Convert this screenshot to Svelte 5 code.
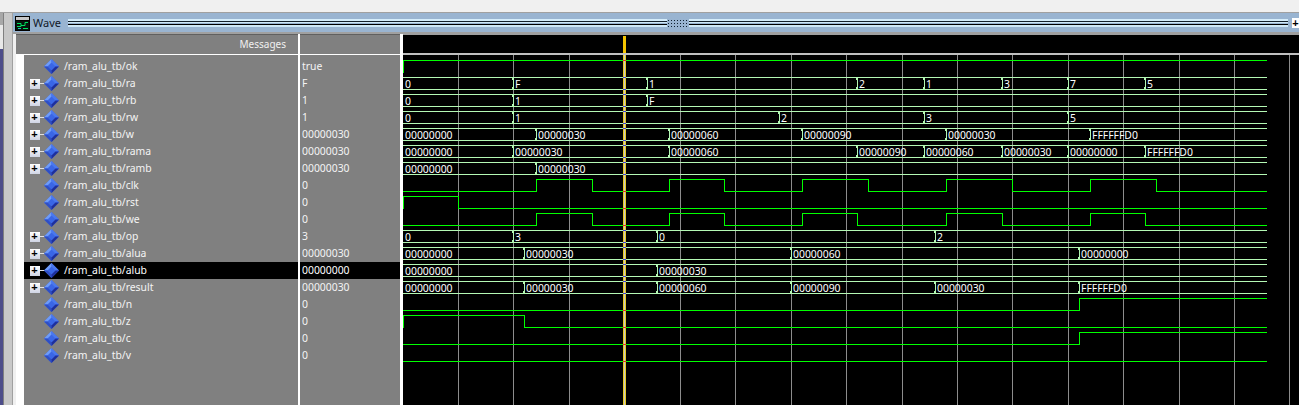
<script>
  const names = [
    ['ok','true',0],['ra','F',1],['rb','1',1],['rw','1',1],['w','00000030',1],['rama','00000030',1],['ramb','00000030',1],
    ['clk','0',0],['rst','0',0],['we','0',0],['op','3',1],['alua','00000030',1],['alub','00000000',1],['result','00000030',1],
    ['n','0',0],['z','0',0],['c','0',0],['v','0',0]
  ].map(([n,v,e],i)=>({name:'/ram_alu_tb/'+n,value:v,exp:!!e,sel:n==='alub',i}));

  const END = 1267, CUR = 623;
  const Z='00000000', H3='00000030', H6='00000060', H9='00000090', FD='FFFFFFD0';
  const buses = [
    [1,[[403,'0'],[513,'F'],[647,'1'],[857,'2'],[924,'1'],[1002,'3'],[1068,'7'],[1145,'5']]],
    [2,[[403,'0'],[513,'1'],[647,'F']]],
    [3,[[403,'0'],[513,'1'],[779,'2'],[924,'3'],[1068,'5']]],
    [4,[[403,Z],[536,H3],[669,H6],[802,H9],[946,H3],[1090,FD]]],
    [5,[[403,Z],[513,H3],[669,H6],[857,H9],[924,H6],[1002,H3],[1068,Z],[1145,FD]]],
    [6,[[403,Z],[536,H3]]],
    [10,[[403,'0'],[513,'3'],[657,'0'],[935,'2']]],
    [11,[[403,Z],[524,H3],[791,H6],[1079,Z]]],
    [12,[[403,Z],[657,H3]]],
    [13,[[403,Z],[524,H3],[657,H6],[791,H9],[935,H3],[1079,FD]]]
  ].map(([row,s])=>{
    const t=60+17*row, b=t+12;
    let d='';
    const labels=[];
    s.forEach(([x,label],k)=>{
      const nx = k+1<s.length ? s[k+1][0] : null;
      const x0 = k===0 ? x : x+1;
      if(nx===null){
        d+=`M${x0} ${t+.5}H${END}M${x0} ${b+.5}H${END}`;
      } else {
        d+=`M${x0} ${t+.5}H${nx-1}L${nx} ${t+2.5}V${b-1.5}L${nx-1} ${b+.5}H${x0}`;
        d+=`M${nx+1} ${t+.5}L${nx} ${t+2.5}M${nx+1} ${b+.5}L${nx} ${b-1.5}`;
      }
      labels.push({x:x+2,y:t+11,label});
    });
    return {d,labels,t,b};
  });

  // bit signals: [row, initial level, transitions, starts with a rising stub]
  const bits = [
    [0,1,[],true],
    [7,0,[536,592,669,724,802,868,946,1012,1090,1156]],
    [8,1,[458],true],
    [9,0,[536,592,669,724,802,857,946,1002,1090,1145]],
    [14,0,[1079]],
    [15,1,[524],true],
    [16,0,[1079]],
    [17,0,[]]
  ].map(([row,lvl,tr,stub])=>{
    const hi=60+17*row+.5, lo=hi+12;
    let cur=lvl, d = stub ? `M403.5 ${lo}V${hi}` : `M403 ${cur?hi:lo}`;
    tr.forEach(x=>{ d+=`H${x+.5}V${cur?lo:hi}`; cur=cur?0:1; });
    d+=`H${END}`;
    return {d};
  });

  const grid = [458,513,569,680,735,791,846,902,957,1012,1068,1123,1179,1234,1289];

  const bitMarks = [60,191,208,225,310,327,344,361];
  const busMarks = buses.flatMap(b=>[b.t,b.b]);
</script>

<div class="page">
  <div class="menu"></div>
  <div class="body">
    <div class="strip">
      <div class="s-a"></div><div class="s-b"></div><div class="s-c"></div>
    </div>
    <div class="strip2"></div>
    <div class="window">
      <div class="title">
        <svg class="wicon" width="15" height="15" viewBox="0 0 15 15">
          <rect width="15" height="15" fill="#000"/>
          <rect x="1" y="1" width="13" height="3" fill="#c8c8c8"/>
          <rect x="1" y="5" width="13" height="9" fill="#06140c"/>
          <path d="M2 7.5H6V10.5H2M6 9.5H10V6.5H13M8 12.5H13" stroke="#00e060" fill="none"/>
          <path d="M3 12.5H6" stroke="#20c0c0" fill="none"/>
        </svg>
        <span class="wname">Wave</span>
        <div class="grip">
          <div class="lines"></div>
          <div class="dots"></div>
          <div class="lines"></div>
        </div>
        <div class="plus">+</div>
      </div>
      <div class="sep"></div>
      <div class="panes">
        <div class="col names">
          <div class="head msg">Messages</div>
          <div class="list">
            {#each names as r}
              <div class="row" class:sel={r.sel}>
                <span class="exp-slot">
                  {#if r.exp}<span class="exp">+</span><span class="conn"></span>{/if}
                </span>
                <svg class="dia" width="15" height="15" viewBox="0 0 15 15">
                  <path d="M7.5 0L15 7.5L7.5 15L0 7.5Z" fill="#3a66e6"/>
                  <path d="M7.5 0L0 7.5L3.5 7.5L7.5 3.5Z" fill="#6f9cf8"/>
                  <path d="M7.5 0L15 7.5L11.5 7.5L7.5 3.5Z" fill="#4a78ee"/>
                  <path d="M0 7.5L7.5 15L7.5 11.5L3.5 7.5Z" fill="#2f4fc4"/>
                  <path d="M15 7.5L7.5 15L7.5 11.5L11.5 7.5Z" fill="#1e2f9c"/>
                </svg>
                <span class="nm">{r.name}</span>
              </div>
            {/each}
          </div>
        </div>
        <div class="col values">
          <div class="head"></div>
          <div class="list vlist">
            {#each names as r}
              <div class="row v" class:sel={r.sel}><span class="vt">{r.value}</span></div>
            {/each}
          </div>
        </div>
        <div class="col wave">
          <div class="wavehead"><div class="curhead"></div></div>
          <svg class="canvas" width="896" height="350" viewBox="403 55 896 350">
            {#each grid as x}
              <rect x={x} y="55" width="1" height="350" fill="#8c8c8c"/>
            {/each}
            {#each bits as b}
              <path d={b.d} fill="none" stroke="#00ff00" stroke-width="1" shape-rendering="crispEdges"/>
            {/each}
            {#each buses as b}
              <path d={b.d} fill="none" stroke="#b4f8b4" stroke-width="1" shape-rendering="crispEdges"/>
              {#each b.labels as l}
                <text x={l.x} y={l.y} class="lbl">{l.label}</text>
              {/each}
            {/each}
            <rect x={CUR} y="55" width="1" height="350" fill="#e8cc20"/>
            <rect x={CUR+1} y="55" width="1" height="350" fill="#c8c8c8"/>
            <rect x={CUR+2} y="55" width="1" height="350" fill="#e8cc20"/>
            {#each bitMarks as y}
              <rect x={CUR} y={y} width="3" height="1" fill="#f02020"/>
            {/each}
            {#each busMarks as y}
              <rect x={CUR} y={y} width="3" height="1" fill="#4040d0"/>
            {/each}
          </svg>
        </div>
      </div>
    </div>
  </div>
</div>

<style>
  :global(body) { margin: 0; background: #f0f0f0; overflow: hidden; }
  .page { width: 1299px; height: 405px; overflow: hidden; display: flex; flex-direction: column; font-family: "Noto Sans", "Liberation Sans", sans-serif; }
  .menu { height: 12px; background: #f0f0f0; flex: none; }
  .body { display: flex; flex: 1; min-height: 0; border-top: 1px solid #a0a0a0; }
  .strip { width: 3px; display: flex; flex-direction: column; flex: none; }
  .s-a { height: 12px; background: #a8a8a8; }
  .s-b { height: 24px; background: #e8e8e8; }
  .s-c { flex: 1; background: #4d4d8a; }
  .strip2 { width: 8px; background: #c8c8c8; border-left: 1px solid #808080; flex: none; }
  .window { flex: 1; min-width: 0; display: flex; flex-direction: column; background: #f0f0f0; border-left: 1px solid #a0a0a0; }
  .title { height: 19px; background: #99b4d1; display: flex; align-items: center; padding-left: 2px; flex: none; }
  .wicon { flex: none; margin-top: 1px; }
  .wname { font-size: 11px; color: #101828; margin-left: 3px; width: 35px; flex: none; }
  .grip { flex: 1; display: flex; align-items: center; height: 8px; }
  .lines { flex: 1; height: 8px; background: linear-gradient(#d4ecfa 0 2px, #14202c 2px 3px, #cfe8f8 3px 4px, #99b4d1 4px 5px, #000 5px 6px, #cfe8f8 6px 8px); }
  .dots { width: 22px; height: 8px; background: #99b4d1 radial-gradient(circle, #102030 0.9px, transparent 1px) 0 0 / 3px 3px; flex: none; }
  .plus { width: 7px; height: 10px; margin-left: 4px; background: #fff; color: #000; font: bold 11px/10px "Liberation Sans", sans-serif; text-align: center; flex: none; }
  .sep { height: 2px; background: #a0a0a0; flex: none; }
  .panes { flex: 1; min-height: 0; display: flex; padding-left: 3px; background: #f0f0f0; }
  .col { display: flex; flex-direction: column; flex: none; }
  .names { width: 282px; border-right: 2px solid #fff; }
  .values { width: 100px; border-right: 3px solid #fff; }
  .wave { flex: 1; min-width: 0; }
  .head { height: 19px; background: #808080; color: #f0f0f0; font-size: 10px; line-height: 19px; border-top: 1px solid #606060; flex: none; }
  .msg { text-align: right; padding-right: 12px; }
  .list { flex: 1; background: #808080; border-top: 1px solid #fff; padding-top: 3px; }
  .names .list { border-left: 8px solid #fff; }
  .row { height: 17px; display: flex; align-items: center; color: #f4f4f4; font-size: 10.4px; white-space: nowrap; }
  .row.sel { background: #000; color: #fff; }
  .exp-slot { width: 20px; height: 17px; flex: none; display: flex; align-items: center; padding-left: 5.5px; box-sizing: border-box; }
  .exp { width: 10px; height: 10px; background: linear-gradient(#fff, #cfd4e4); color: #000; font: bold 11px/9px "Liberation Sans", sans-serif; text-align: center; flex: none; }
  .conn { width: 5px; height: 1px; background: #e0e0e0; flex: none; }
  .dia { flex: none; }
  .nm { margin-left: 5px; padding-bottom: 2px; }
  .v { padding-left: 2px; }
  .vt { padding-bottom: 2px; }
  .wavehead { height: 18px; background: #000; border-top: 1px solid #a0a0a0; border-bottom: 2px solid #c0c0c0; position: relative; flex: none; }
  .curhead { position: absolute; left: 220px; top: 1px; width: 3px; height: 17px; background: #f5c400; }
  .canvas { display: block; background: #000; flex: none; }
  .lbl { fill: #fff; font-size: 10.4px; font-family: "Noto Sans", "Liberation Sans", sans-serif; }
</style>
